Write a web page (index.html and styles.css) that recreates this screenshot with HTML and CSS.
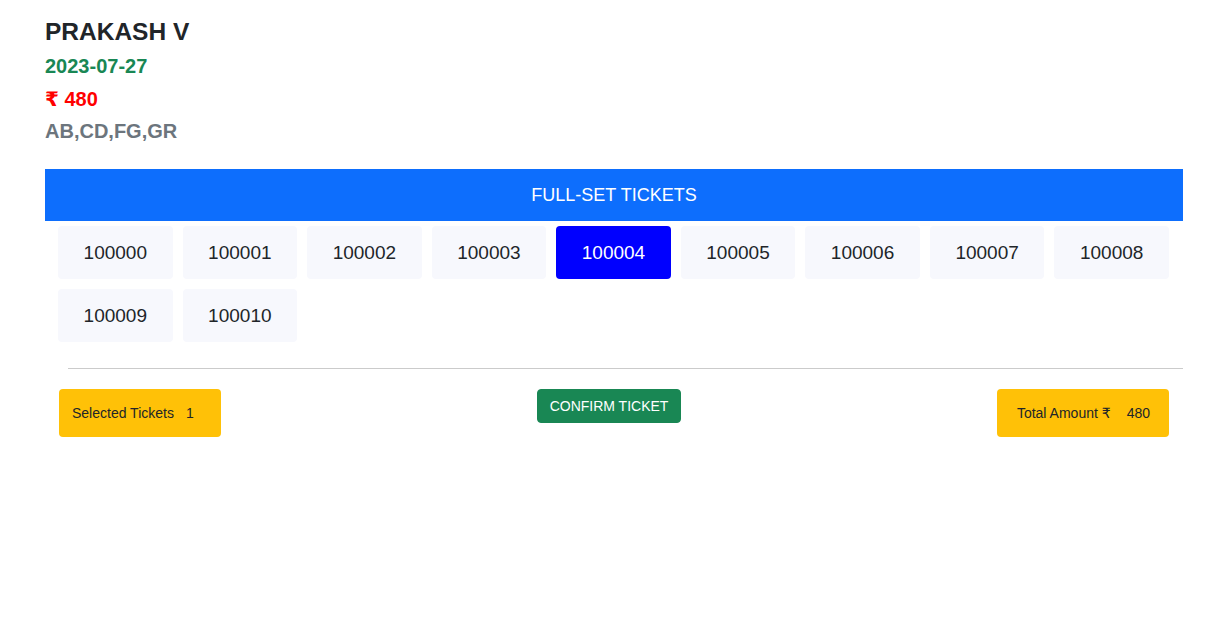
FILE: index.html
```html
<!DOCTYPE html>
<html lang="en">
<head>
<meta charset="utf-8">
<title>Full-set Tickets</title>
<link rel="stylesheet" href="styles.css">
</head>
<body>
<div class="page">
  <div class="info">
    <h4 class="name">PRAKASH V</h4>
    <h5 class="date">2023-07-27</h5>
    <h5 class="price">₹ 480</h5>
    <h5 class="codes">AB,CD,FG,GR</h5>
  </div>
  <div class="bar">FULL-SET TICKETS</div>
  <div class="tickets">
    <div class="ticket">100000</div>
    <div class="ticket">100001</div>
    <div class="ticket">100002</div>
    <div class="ticket">100003</div>
    <div class="ticket selected">100004</div>
    <div class="ticket">100005</div>
    <div class="ticket">100006</div>
    <div class="ticket">100007</div>
    <div class="ticket">100008</div>
    <div class="ticket">100009</div>
    <div class="ticket">100010</div>
  </div>
  <hr class="divider">
  <div class="footer">
    <div class="pill pill-left">Selected Tickets <span class="val">1</span></div>
    <div class="center"><button class="confirm">CONFIRM TICKET</button></div>
    <div class="right"><div class="pill pill-right">Total Amount ₹ <span class="val val-amt">480</span></div></div>
  </div>
</div>
</body>
</html>
```
FILE: styles.css
```css
* { box-sizing: border-box; }
body {
  margin: 0;
  font-family: "Liberation Sans", Arial, "DejaVu Sans", sans-serif;
  color: #212529;
  background: #fff;
}
.page {
  padding: 17px 37px 0 45px;
}
.info { margin-bottom: 26px; }
.name {
  margin: 0 0 8px;
  font-size: 24.5px;
  line-height: 29px;
  font-weight: bold;
  color: #212529;
}
.info h5 {
  margin: 0 0 8.5px;
  font-size: 20px;
  line-height: 24px;
  font-weight: bold;
}
.info h5.codes { margin-bottom: 0; }
.date { color: #198754; }
.price { color: #ff0000; }
.codes { color: #6c757d; }
.bar {
  background: #0d6efd;
  color: #fff;
  height: 52px;
  display: flex;
  align-items: center;
  justify-content: center;
  font-size: 18px;
}
.tickets {
  margin-top: 5px;
  padding: 0 14px 0 13px;
  display: flex;
  flex-wrap: wrap;
  gap: 10px;
}
.ticket {
  width: calc((100% - 80px) / 9);
  height: 53px;
  display: flex;
  align-items: center;
  justify-content: center;
  background: #f7f8fd;
  border-radius: 4px;
  font-size: 19px;
  color: #212529;
}
.ticket.selected {
  background: #0000ff;
  color: #fff;
}
.divider {
  margin: 26px 0 20px 23px;
  border: 0;
  border-top: 1px solid #cbcbcb;
  height: 0;
}
.footer {
  display: grid;
  grid-template-columns: 1fr auto 1fr;
  align-items: start;
  padding: 0 14px;
}
.pill {
  background: #ffc107;
  border-radius: 4px;
  height: 48px;
  display: inline-flex;
  align-items: center;
  font-size: 14px;
  color: #212529;
  justify-self: start;
}
.pill-left { padding: 0 27px 0 13px; }
.pill-left .val { margin-left: 12px; }
.right { display: flex; justify-content: flex-end; }
.pill-right { padding: 0 19px 0 20px; }
.pill-right .val { margin-left: 16px; }
.center { margin-right: 10px; }
.confirm {
  font-family: inherit;
  font-size: 14px;
  line-height: 20px;
  padding: 6px 12px;
  background: #198754;
  color: #fff;
  border: 1px solid #198754;
  border-radius: 4px;
  cursor: pointer;
}
```
